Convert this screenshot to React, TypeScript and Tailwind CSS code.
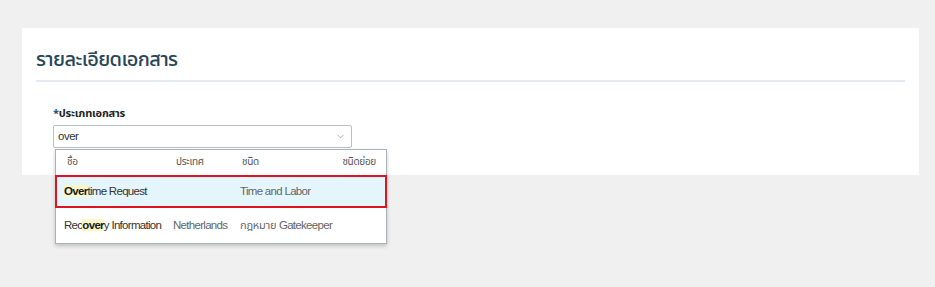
import { ChevronDown } from "lucide-react";

const thai = { fontFamily: '"Noto Sans Thai", Tahoma, "Noto Sans", sans-serif' };

function Hit({ text, hit }: { text: string; hit: string }) {
  const i = text.toLowerCase().indexOf(hit.toLowerCase());
  if (i < 0) return <>{text}</>;
  return (
    <>
      {text.slice(0, i)}
      <span className="font-bold text-[#1a1a1a] bg-[#fbf6c8]">{text.slice(i, i + hit.length)}</span>
      {text.slice(i + hit.length)}
    </>
  );
}

export default function App() {
  const rows = [
    { name: "Overtime Request", country: "", type: "Time and Labor", selected: true },
    { name: "Recovery Information", country: "Netherlands", type: "กฎหมาย Gatekeeper", selected: false },
  ];

  return (
    <div className="w-[935px] h-[287px] bg-[#f0f0f0] pt-[28px] pl-[22px] font-['Liberation_Sans',Arial,sans-serif]">
      <div className="w-[897px] h-[147px] bg-white px-[14px] pt-[14px] relative">
        <h1
          className="text-[20px] leading-[36px] tracking-[-0.6px] font-medium text-[#27465a] pb-[2px] border-b-2 border-[#e3e9ee]"
          style={thai}
        >
          รายละเอียดเอกสาร
        </h1>
        <div className="pl-[17px] pt-[24px]">
          <div className="text-[11px] leading-[16px] font-bold text-[#222] tracking-[-0.2px]" style={thai}>
            <span className="text-[#1c4f7a]">*</span>ประเภทเอกสาร
          </div>
          <div className="mt-[3px] w-[299px] h-[23px] border border-[#b8c0c6] rounded-[2px] flex items-center justify-between pl-[4px] pr-[5px]">
            <span className="text-[11.5px] tracking-[-0.5px] text-[#333]">over</span>
            <ChevronDown className="w-[11px] h-[11px] text-[#8a9198]" strokeWidth={1.5} />
          </div>
          <div className="absolute left-[33px] top-[121px] w-[332px] bg-white border border-[#a9b2b8] shadow-[0_2px_4px_rgba(0,0,0,0.2)] z-10">
            <div
              className="flex h-[25px] items-center text-[10px] tracking-[-0.3px] text-[#555] pl-[11px] pr-[10px]"
              style={thai}
            >
              <span className="w-[109px]">ชื่อ</span>
              <span className="w-[66px]">ประเทศ</span>
              <span className="flex-1">ชนิด</span>
              <span>ชนิดย่อย</span>
            </div>
            {rows.map((r) => (
              <div
                key={r.name}
                className={
                  r.selected
                    ? "flex items-center h-[33px] pl-[7px] text-[11.5px] tracking-[-0.7px] text-[#333] bg-[#e5f5fc] border-2 border-[#e0141e] -mx-[1px]"
                    : "flex items-center h-[35px] pl-[8px] text-[11.5px] tracking-[-0.7px] text-[#333]"
                }
              >
                <span className="w-[109px] whitespace-nowrap">
                  <Hit text={r.name} hit="over" />
                </span>
                <span className="w-[67px] text-[#666]">{r.country}</span>
                <span className="flex-1 text-[#666]">
                  {r.type.split(" ").map((w, k) =>
                    /[ก-๙]/.test(w) ? (
                      <span key={k} className="text-[11px] tracking-[-0.2px]" style={thai}>{w} </span>
                    ) : (
                      <span key={k}>{w} </span>
                    )
                  )}
                </span>
              </div>
            ))}
          </div>
        </div>
      </div>
    </div>
  );
}
